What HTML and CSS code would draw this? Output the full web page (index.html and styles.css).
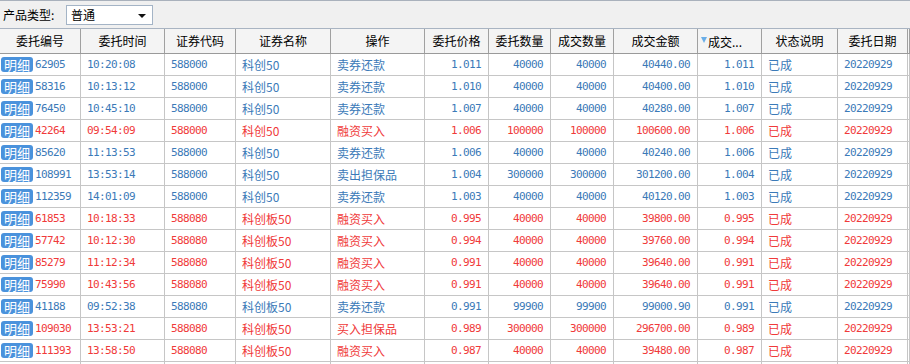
FILE: index.html
```html
<!DOCTYPE html>
<html lang="zh">
<head>
<meta charset="utf-8">
<title>委托查询</title>
<link rel="stylesheet" href="styles.css">
</head>
<body>
<div class="toolbar">
  <span class="label">产品类型:</span>
  <div class="select"><span>普通</span><i class="arrow"></i></div>
</div>
<div class="grid">
  <div class="row head">
    <div class="c">委托编号</div><div class="c">委托时间</div><div class="c">证券代码</div><div class="c">证券名称</div><div class="c">操作</div><div class="c">委托价格</div><div class="c">委托数量</div><div class="c">成交数量</div><div class="c">成交金额</div><div class="c sort"><i class="tri"></i>成交...</div><div class="c">状态说明</div><div class="c">委托日期</div><div class="c"></div>
  </div>
  <div class="row blue"><div class="c id"><span class="badge">明细</span><span class="n">62905</span></div><div class="c t n">10:20:08</div><div class="c t n">588000</div><div class="c t">科创50</div><div class="c t">卖券还款</div><div class="c r n">1.011</div><div class="c r n">40000</div><div class="c r n">40000</div><div class="c r n">40440.00</div><div class="c r n">1.011</div><div class="c t">已成</div><div class="c t n">20220929</div><div class="c"></div></div>
  <div class="row blue"><div class="c id"><span class="badge">明细</span><span class="n">58316</span></div><div class="c t n">10:13:12</div><div class="c t n">588000</div><div class="c t">科创50</div><div class="c t">卖券还款</div><div class="c r n">1.010</div><div class="c r n">40000</div><div class="c r n">40000</div><div class="c r n">40400.00</div><div class="c r n">1.010</div><div class="c t">已成</div><div class="c t n">20220929</div><div class="c"></div></div>
  <div class="row blue"><div class="c id"><span class="badge">明细</span><span class="n">76450</span></div><div class="c t n">10:45:10</div><div class="c t n">588000</div><div class="c t">科创50</div><div class="c t">卖券还款</div><div class="c r n">1.007</div><div class="c r n">40000</div><div class="c r n">40000</div><div class="c r n">40280.00</div><div class="c r n">1.007</div><div class="c t">已成</div><div class="c t n">20220929</div><div class="c"></div></div>
  <div class="row red"><div class="c id"><span class="badge">明细</span><span class="n">42264</span></div><div class="c t n">09:54:09</div><div class="c t n">588000</div><div class="c t">科创50</div><div class="c t">融资买入</div><div class="c r n">1.006</div><div class="c r n">100000</div><div class="c r n">100000</div><div class="c r n">100600.00</div><div class="c r n">1.006</div><div class="c t">已成</div><div class="c t n">20220929</div><div class="c"></div></div>
  <div class="row blue"><div class="c id"><span class="badge">明细</span><span class="n">85620</span></div><div class="c t n">11:13:53</div><div class="c t n">588000</div><div class="c t">科创50</div><div class="c t">卖券还款</div><div class="c r n">1.006</div><div class="c r n">40000</div><div class="c r n">40000</div><div class="c r n">40240.00</div><div class="c r n">1.006</div><div class="c t">已成</div><div class="c t n">20220929</div><div class="c"></div></div>
  <div class="row blue"><div class="c id"><span class="badge">明细</span><span class="n">108991</span></div><div class="c t n">13:53:14</div><div class="c t n">588000</div><div class="c t">科创50</div><div class="c t">卖出担保品</div><div class="c r n">1.004</div><div class="c r n">300000</div><div class="c r n">300000</div><div class="c r n">301200.00</div><div class="c r n">1.004</div><div class="c t">已成</div><div class="c t n">20220929</div><div class="c"></div></div>
  <div class="row blue"><div class="c id"><span class="badge">明细</span><span class="n">112359</span></div><div class="c t n">14:01:09</div><div class="c t n">588000</div><div class="c t">科创50</div><div class="c t">卖券还款</div><div class="c r n">1.003</div><div class="c r n">40000</div><div class="c r n">40000</div><div class="c r n">40120.00</div><div class="c r n">1.003</div><div class="c t">已成</div><div class="c t n">20220929</div><div class="c"></div></div>
  <div class="row red"><div class="c id"><span class="badge">明细</span><span class="n">61853</span></div><div class="c t n">10:18:33</div><div class="c t n">588080</div><div class="c t">科创板50</div><div class="c t">融资买入</div><div class="c r n">0.995</div><div class="c r n">40000</div><div class="c r n">40000</div><div class="c r n">39800.00</div><div class="c r n">0.995</div><div class="c t">已成</div><div class="c t n">20220929</div><div class="c"></div></div>
  <div class="row red"><div class="c id"><span class="badge">明细</span><span class="n">57742</span></div><div class="c t n">10:12:30</div><div class="c t n">588080</div><div class="c t">科创板50</div><div class="c t">融资买入</div><div class="c r n">0.994</div><div class="c r n">40000</div><div class="c r n">40000</div><div class="c r n">39760.00</div><div class="c r n">0.994</div><div class="c t">已成</div><div class="c t n">20220929</div><div class="c"></div></div>
  <div class="row red"><div class="c id"><span class="badge">明细</span><span class="n">85279</span></div><div class="c t n">11:12:34</div><div class="c t n">588080</div><div class="c t">科创板50</div><div class="c t">融资买入</div><div class="c r n">0.991</div><div class="c r n">40000</div><div class="c r n">40000</div><div class="c r n">39640.00</div><div class="c r n">0.991</div><div class="c t">已成</div><div class="c t n">20220929</div><div class="c"></div></div>
  <div class="row red"><div class="c id"><span class="badge">明细</span><span class="n">75990</span></div><div class="c t n">10:43:56</div><div class="c t n">588080</div><div class="c t">科创板50</div><div class="c t">融资买入</div><div class="c r n">0.991</div><div class="c r n">40000</div><div class="c r n">40000</div><div class="c r n">39640.00</div><div class="c r n">0.991</div><div class="c t">已成</div><div class="c t n">20220929</div><div class="c"></div></div>
  <div class="row blue"><div class="c id"><span class="badge">明细</span><span class="n">41188</span></div><div class="c t n">09:52:38</div><div class="c t n">588080</div><div class="c t">科创板50</div><div class="c t">卖券还款</div><div class="c r n">0.991</div><div class="c r n">99900</div><div class="c r n">99900</div><div class="c r n">99000.90</div><div class="c r n">0.991</div><div class="c t">已成</div><div class="c t n">20220929</div><div class="c"></div></div>
  <div class="row red"><div class="c id"><span class="badge">明细</span><span class="n">109030</span></div><div class="c t n">13:53:21</div><div class="c t n">588080</div><div class="c t">科创板50</div><div class="c t">买入担保品</div><div class="c r n">0.989</div><div class="c r n">300000</div><div class="c r n">300000</div><div class="c r n">296700.00</div><div class="c r n">0.989</div><div class="c t">已成</div><div class="c t n">20220929</div><div class="c"></div></div>
  <div class="row red"><div class="c id"><span class="badge">明细</span><span class="n">111393</span></div><div class="c t n">13:58:50</div><div class="c t n">588080</div><div class="c t">科创板50</div><div class="c t">融资买入</div><div class="c r n">0.987</div><div class="c r n">40000</div><div class="c r n">40000</div><div class="c r n">39480.00</div><div class="c r n">0.987</div><div class="c t">已成</div><div class="c t n">20220929</div><div class="c"></div></div>
  <div class="row blue"><div class="c"></div><div class="c"></div><div class="c"></div><div class="c"></div><div class="c"></div><div class="c"></div><div class="c"></div><div class="c"></div><div class="c"></div><div class="c"></div><div class="c"></div><div class="c"></div><div class="c"></div></div>
</div>
</body>
</html>
```
FILE: styles.css
```css
html, body {
  margin: 0;
  padding: 0;
  background: #ffffff;
  overflow: hidden;
}
body {
  font-family: "Noto Sans CJK SC", "Noto Sans", sans-serif;
  font-size: 12px;
  color: #000;
}
.toolbar {
  height: 27px;
  border-top: 1px solid #a9b1bc;
  border-bottom: 1px solid #a9b4c2;
  background: #f0f0f0;
  display: flex;
  align-items: center;
  padding-left: 3px;
}
.label {
  font-size: 12px;
  line-height: 16px;
  width: 63px;
}
.select {
  border: 1px solid #a4b4c6;
  background: #fff;
  display: flex;
  align-items: center;
  justify-content: space-between;
  padding: 0 6px 0 4px;
  box-sizing: border-box;
  width: 87px;
  height: 20px;
  margin-top: 1px;
}
.select span {
  font-size: 12px;
  line-height: 16px;
}
.arrow {
  width: 0;
  height: 0;
  border-left: 4px solid transparent;
  border-right: 4px solid transparent;
  border-top: 4px solid #111;
  margin-top: 1px;
}
.grid {
  display: flex;
  flex-direction: column;
}
.row {
  display: grid;
  grid-template-columns: 81px 84px 71px 95px 94px 64px 62px 63px 84px 64px 76px 70px 1fr;
  height: 22px;
  border-bottom: 1px solid #c6c6c6;
  box-sizing: border-box;
}
.row .c {
  border-right: 1px solid #c6c6c6;
  box-sizing: border-box;
  line-height: 21px;
  white-space: nowrap;
  overflow: hidden;
}
.row.head {
  height: 25px;
  background: #f4f4f4;
  border-bottom: 1px solid #9a9a9a;
}
.row.head .c {
  border-right: 1px solid #a0a0a0;
  text-align: center;
  line-height: 23px;
  color: #000;
}
.row.head .sort {
  text-align: left;
  padding-left: 3px;
  display: flex;
  align-items: center;
  gap: 1px;
}
.tri {
  width: 0;
  height: 0;
  border-left: 3.5px solid transparent;
  border-right: 3.5px solid transparent;
  border-top: 6px solid #6aaee8;
  margin-top: -2px;
}
.blue { color: #3b7ab8; }
.red { color: #f03a3a; }
.n {
  font-family: "DejaVu Sans Mono", "Liberation Mono", monospace;
  font-size: 11px;
  letter-spacing: -0.62px;
}
.t { padding-left: 6px; }
.r { text-align: right; padding-right: 7px; }
.id {
  display: flex;
  align-items: center;
}
.badge {
  display: inline-block;
  width: 32px;
  height: 15px;
  margin: 0 2px 0 1px;
  background: #4a92dc;
  color: #fff;
  border-radius: 3px;
  font-size: 13px;
  line-height: 15px;
  text-align: center;
  font-family: "Noto Sans CJK SC", sans-serif;
}
```
